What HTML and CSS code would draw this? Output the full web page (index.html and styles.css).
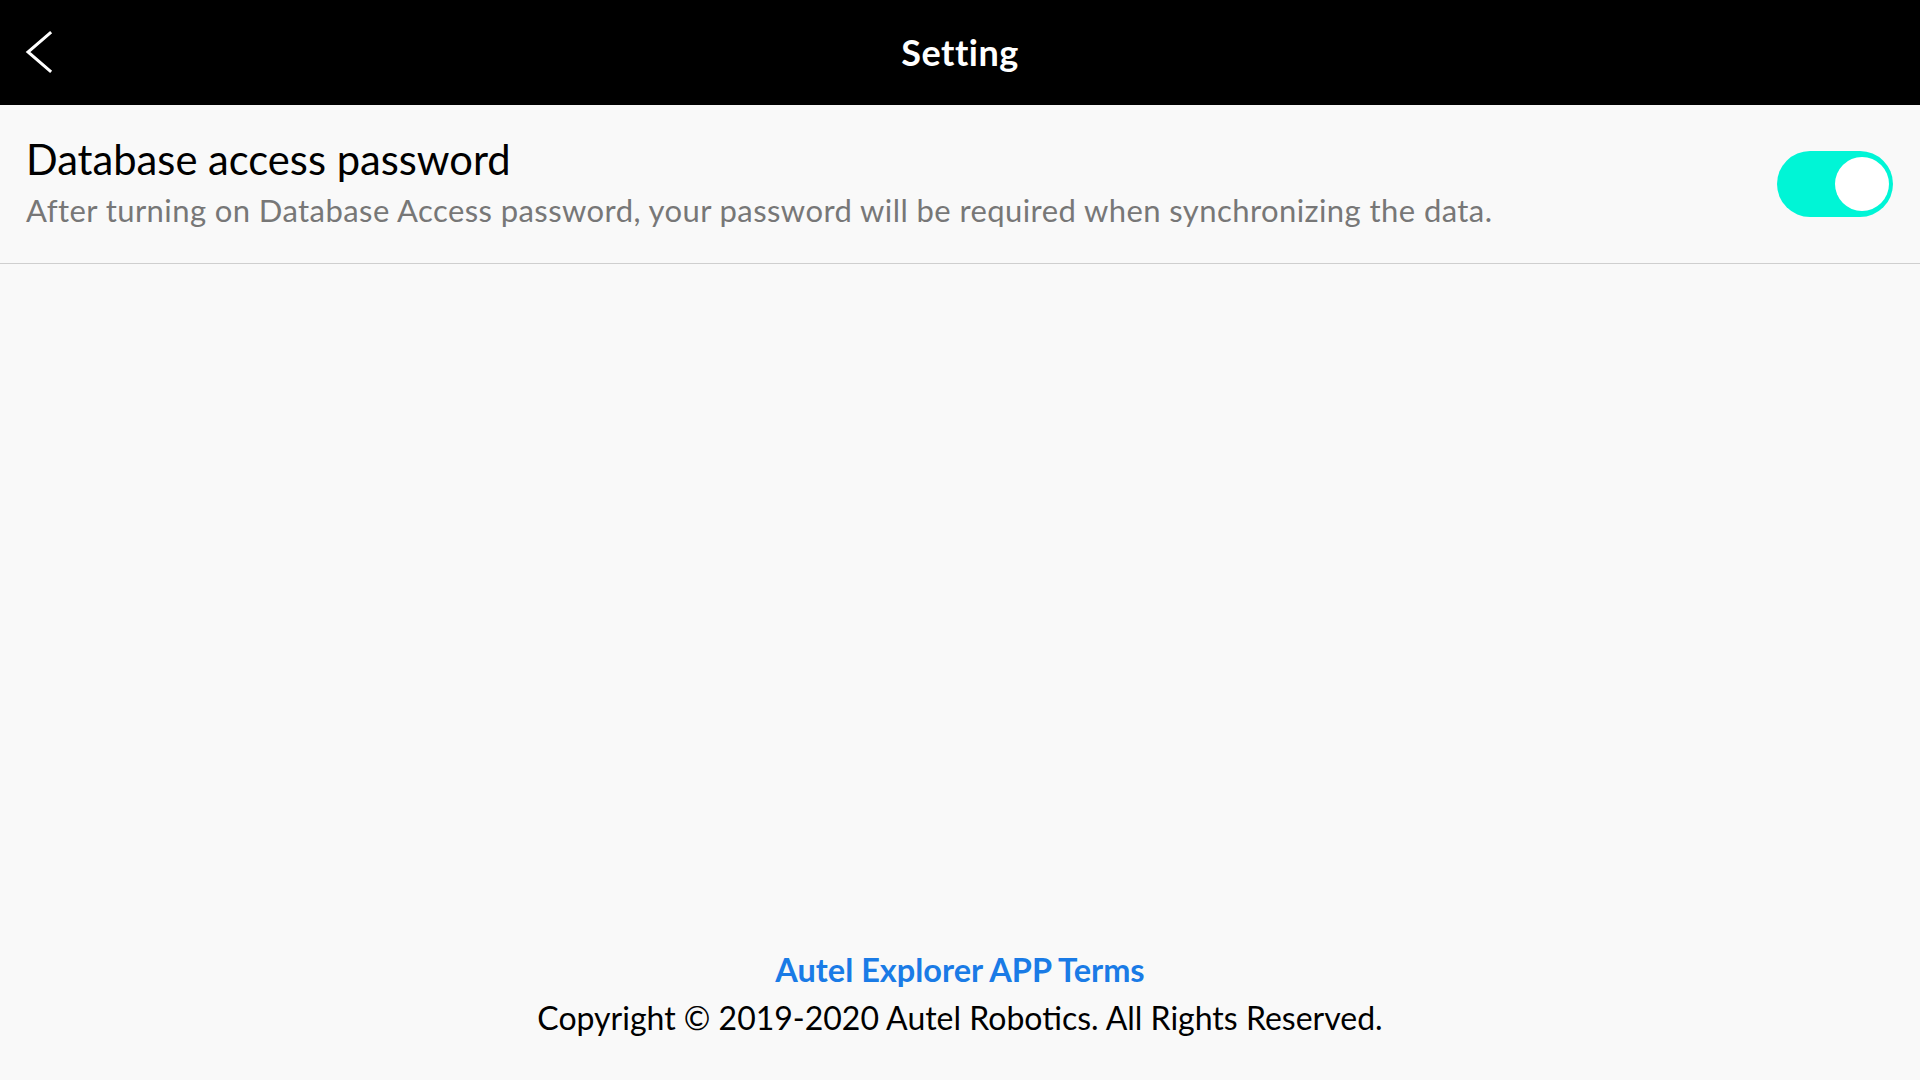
FILE: index.html
```html
<!DOCTYPE html>
<html lang="en">
<head>
<meta charset="utf-8">
<title>Setting</title>
<link rel="stylesheet" href="styles.css">
</head>
<body>
<div class="app">
  <header class="topbar">
    <button class="back" aria-label="Back">
      <svg width="30" height="44" viewBox="0 0 30 44"><polyline points="26,3 4,22 26,41" fill="none" stroke="#fff" stroke-width="3" stroke-linecap="square"/></svg>
    </button>
    <h1 class="title">Setting</h1>
  </header>
  <main class="content">
    <section class="row">
      <div class="row-text">
        <div class="row-title">Database access password</div>
        <div class="row-desc">After turning on Database Access password, your password will be required when synchronizing the data.</div>
      </div>
      <div class="toggle on"><span class="knob"></span></div>
    </section>
  </main>
  <footer class="footer">
    <a class="terms" href="#">Autel Explorer APP Terms</a>
    <div class="copy">Copyright © 2019-2020 Autel Robotics. All Rights Reserved.</div>
  </footer>
</div>
</body>
</html>
```
FILE: styles.css
```css
* { box-sizing: border-box; }
html, body { margin: 0; padding: 0; }
body {
  background: #f9f9f9;
  font-family: Lato, "Open Sans", sans-serif;
  color: #000;
}
.app {
  height: 1080px;
  display: flex;
  flex-direction: column;
}
.topbar {
  height: 105px;
  background: #000;
  display: flex;
  align-items: center;
  justify-content: center;
  position: relative;
}
.back {
  position: absolute;
  left: 24px;
  top: 30px;
  background: none;
  border: 0;
  padding: 0;
  width: 30px;
  height: 44px;
  display: flex;
}
.title {
  margin: 0 0 2px;
  color: #fff;
  font-size: 36px;
  font-weight: 700;
  line-height: 42px;
  letter-spacing: 0.5px;
}
.content { flex: 1; }
.row {
  display: flex;
  align-items: center;
  justify-content: space-between;
  padding: 30px 27px 35px 26px;
  border-bottom: 1px solid #cfcfcf;
  height: 159px;
}
.row-text {
  display: flex;
  flex-direction: column;
  gap: 9px;
}
.row-title {
  font-size: 41.7px;
  line-height: 48px;
  color: #000;
}
.row-desc {
  font-size: 31px;
  line-height: 36px;
  letter-spacing: 0.42px;
  color: #777;
}
.toggle {
  width: 116px;
  height: 66px;
  border-radius: 33px;
  background: #00f5d6;
  position: relative;
  flex: none;
  margin-top: 5px;
}
.knob {
  position: absolute;
  right: 4px;
  top: 6px;
  width: 54px;
  height: 54px;
  border-radius: 50%;
  background: #fff;
}
.footer {
  display: flex;
  flex-direction: column;
  align-items: center;
  padding-bottom: 38px;
}
.terms {
  color: #1a7be6;
  font-weight: 700;
  font-size: 32.5px;
  line-height: 40px;
  margin-bottom: 4px;
  text-decoration: none;
}
.copy {
  font-size: 32px;
  line-height: 48px;
  color: #000;
}
```
